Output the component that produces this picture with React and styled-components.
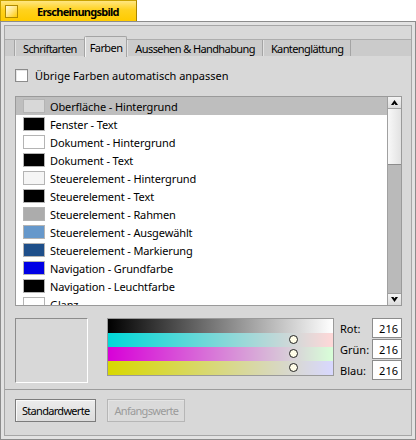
import React from 'react'
import styled, { createGlobalStyle } from 'styled-components'

const Global = createGlobalStyle`
  body {
    margin: 0;
    background: #fff;
    font-family: "Noto Sans", "DejaVu Sans", sans-serif;
    font-size: 11px;
    color: #000;
  }
`

const colors = [
    ['Oberfläche - Hintergrund', '#d8d8d8'],
    ['Fenster - Text', '#000000'],
    ['Dokument - Hintergrund', '#ffffff'],
    ['Dokument - Text', '#000000'],
    ['Steuerelement - Hintergrund', '#f5f5f5'],
    ['Steuerelement - Text', '#000000'],
    ['Steuerelement - Rahmen', '#acacac'],
    ['Steuerelement - Ausgewählt', '#6698cb'],
    ['Steuerelement - Markierung', '#1e4f8a'],
    ['Navigation - Grundfarbe', '#0000e5'],
    ['Navigation - Leuchtfarbe', '#000000'],
    ['Glanz', '#ffffff'],
]

const tabs = ['Schriftarten', 'Farben', 'Aussehen & Handhabung', 'Kantenglättung']

const channels = [
    { label: 'Rot:', from: 'rgb(0,216,216)', to: 'rgb(255,216,216)' },
    { label: 'Grün:', from: 'rgb(216,0,216)', to: 'rgb(216,255,216)' },
    { label: 'Blau:', from: 'rgb(216,216,0)', to: 'rgb(216,216,255)' },
]

const App = () => {
    // knob position for value 216 out of 255
    const thumbLeft = `calc(${216 / 255} * (100% - 9px) - 2px)`
    return (
        <Page>
            <Global />
            <TitleTab>
                <CloseBox />
                <Title>Erscheinungsbild</Title>
            </TitleTab>
            <Frame>
                <Inner>
                    <TabView>
                        <TabStrip>
                            <TabLead />
                            {tabs.map(t => (
                                <Tab key={t} $active={t === 'Farben'}>{t}</Tab>
                            ))}
                        </TabStrip>
                        <Pane>
                            <CheckRow>
                                <Check />
                                <span>Übrige Farben automatisch anpassen</span>
                            </CheckRow>
                            <ListBox>
                                <List>
                                    {colors.map(([name, c], i) => (
                                        <Row key={name} $selected={i === 0}>
                                            <Swatch $color={c} />
                                            <span>{name}</span>
                                        </Row>
                                    ))}
                                </List>
                                <ScrollBar>
                                    <ArrowButton>
                                        <svg width="7" height="5" viewBox="0 0 7 5">
                                            <path d="M3.5 0 L7 5 L4.5 5 L3.5 3.5 L2.5 5 L0 5 Z" fill="#000" />
                                        </svg>
                                    </ArrowButton>
                                    <Thumb />
                                    <Trough />
                                    <ArrowButton>
                                        <svg width="7" height="5" viewBox="0 0 7 5">
                                            <path d="M3.5 5 L7 0 L4.5 0 L3.5 1.5 L2.5 0 L0 0 Z" fill="#000" />
                                        </svg>
                                    </ArrowButton>
                                </ScrollBar>
                            </ListBox>
                            <ColorRow>
                                <Preview />
                                <Sliders>
                                    <Ramp $from="#000" $to="#fff" />
                                    {channels.map(ch => (
                                        <Ramp key={ch.label} $from={ch.from} $to={ch.to}>
                                            <Knob style={{ left: thumbLeft }} />
                                        </Ramp>
                                    ))}
                                </Sliders>
                                <Fields>
                                    {channels.map(ch => (
                                        <FieldRow key={ch.label}>
                                            <FieldLabel>{ch.label}</FieldLabel>
                                            <Input>216</Input>
                                        </FieldRow>
                                    ))}
                                </Fields>
                            </ColorRow>
                        </Pane>
                    </TabView>
                    <ButtonRow>
                        <Button>Standardwerte</Button>
                        <Button $disabled>Anfangswerte</Button>
                    </ButtonRow>
                </Inner>
            </Frame>
        </Page>
    )
}

const Page = styled.div`
    width: 416px;
    height: 440px;
    display: flex;
    flex-direction: column;
`
const TitleTab = styled.div`
    width: 137px;
    height: 21px;
    box-sizing: border-box;
    border: 1px solid #c9a200;
    border-bottom: none;
    border-right-color: #a88400;
    background: linear-gradient(to bottom, #ffe680 0%, #ffd21e 45%, #ffcb00 100%);
    display: flex;
    align-items: center;
    padding-left: 4px;
`
const CloseBox = styled.div`
    width: 13px;
    height: 13px;
    box-sizing: border-box;
    border: 1px solid #b08a00;
    background: linear-gradient(135deg, #fffbe0 0%, #ffe580 50%, #ffcb00 100%);
`
const Title = styled.div`
    margin-left: 19px;
    font-weight: bold;
    font-size: 11px;
    letter-spacing: -0.75px;
`
const Frame = styled.div`
    flex: 1;
    border: 1px solid #8c8c8c;
    background: #e2e2e2;
    padding: 3px;
    display: flex;
`
const Inner = styled.div`
    flex: 1;
    border: 1px solid #a6a6a6;
    background: #d8d8d8;
    display: flex;
    flex-direction: column;
`
const TabView = styled.div`
    display: flex;
    flex-direction: column;
    border-bottom: 1px solid #9c9c9c;
`
const TabStrip = styled.div`
    margin-top: 13px;
    height: 16px;
    display: flex;
    align-items: flex-end;
    background: #cbcbcb;
    border-top: 1px solid #adadad;
`
const TabLead = styled.div`
    width: 9px;
    height: 16px;
    border-right: 1px solid #a4a4a4;
`
const Tab = styled.div`
    box-sizing: border-box;
    height: ${p => (p.$active ? '21px' : '16px')};
    padding: ${p => (p.$active ? '1px 4px 0' : '0 7px')};
    display: flex;
    align-items: center;
    letter-spacing: -0.6px;
    background: ${p => (p.$active ? '#d8d8d8' : '#cbcbcb')};
    border-left: 1px solid ${p => (p.$active ? '#f4f4f4' : '#e2e2e2')};
    border-right: 1px solid #a4a4a4;
    border-top: ${p => (p.$active ? '1px solid #a4a4a4' : 'none')};
    border-radius: ${p => (p.$active ? '2px 2px 0 0' : '0')};
    box-shadow: ${p => (p.$active ? '-1px 0 0 #a4a4a4' : 'none')};
    margin-bottom: ${p => (p.$active ? '-1px' : '0')};
    color: #000;
    white-space: nowrap;
`
const Pane = styled.div`
    height: 333px;
    padding: 0 9px 0 10px;
    display: flex;
    flex-direction: column;
`
const CheckRow = styled.label`
    margin-top: 13px;
    height: 13px;
    display: flex;
    align-items: center;
    gap: 7px;
`
const Check = styled.span`
    width: 13px;
    height: 13px;
    box-sizing: border-box;
    border: 1px solid #8c8c8c;
    background: #fff;
    box-shadow: inset 1px 1px 0 #e6e6e6;
`
const ListBox = styled.div`
    margin-top: 14px;
    height: 210px;
    box-sizing: border-box;
    border: 1px solid #9a9a9a;
    display: flex;
    background: #fff;
`
const List = styled.div`
    flex: 1;
    overflow: hidden;
    display: flex;
    flex-direction: column;
`
const Row = styled.div`
    flex: none;
    height: 18px;
    display: flex;
    align-items: center;
    padding-left: 7px;
    gap: 5px;
    letter-spacing: -0.12px;
    background: ${p => (p.$selected ? '#bebebe' : '#fff')};
`
const Swatch = styled.span`
    width: 22px;
    height: 14px;
    box-sizing: border-box;
    border: 1px solid #b4b4b4;
    background: ${p => p.$color};
`
const ScrollBar = styled.div`
    width: 13px;
    border-left: 1px solid #a0a0a0;
    display: flex;
    flex-direction: column;
    background: #bcbcbc;
`
const ArrowButton = styled.div`
    height: 12px;
    box-sizing: border-box;
    border: 1px solid #a0a0a0;
    border-left: none;
    border-right: none;
    background: linear-gradient(to bottom, #f4f4f4, #dcdcdc);
    display: flex;
    align-items: center;
    justify-content: center;
    &:first-child { border-top: none; }
    &:last-child { border-bottom: none; }
`
const Thumb = styled.div`
    height: 56px;
    box-sizing: border-box;
    border-bottom: 1px solid #8c8c8c;
    background: linear-gradient(to right, #f8f8f8, #e2e2e2);
`
const Trough = styled.div`
    flex: 1;
    background: #bababa;
`
const ColorRow = styled.div`
    margin-top: 12px;
    display: flex;
    align-items: flex-start;
`
const Preview = styled.div`
    width: 73px;
    height: 65px;
    box-sizing: border-box;
    border: 1px solid;
    border-color: #8c8c8c #fff #fff #8c8c8c;
    background: #d8d8d8;
`
const Sliders = styled.div`
    margin-left: 19px;
    width: 227px;
    box-sizing: border-box;
    border: 1px solid #9a9a9a;
    display: flex;
    flex-direction: column;
`
const Ramp = styled.div`
    position: relative;
    height: 14px;
    background: linear-gradient(to right, ${p => p.$from}, ${p => p.$to});
`
const Knob = styled.span`
    position: absolute;
    top: 2px;
    width: 9px;
    height: 9px;
    box-sizing: border-box;
    border-radius: 50%;
    border: 1px solid #202020;
    background: #fffde8;
`
const Fields = styled.div`
    margin-left: 6px;
    flex: 1;
    display: flex;
    flex-direction: column;
    gap: 1px;
`
const FieldRow = styled.div`
    height: 20px;
    display: flex;
    align-items: center;
`
const FieldLabel = styled.span`
    flex: 1;
`
const Input = styled.div`
    width: 30px;
    height: 20px;
    box-sizing: border-box;
    border: 1px solid #8c8c8c;
    background: #fff;
    text-align: right;
    padding: 2px 3px 0 0;
`
const ButtonRow = styled.div`
    padding: 9px 10px;
    display: flex;
    gap: 11px;
`
const Button = styled.div`
    height: 23px;
    box-sizing: border-box;
    padding: 0 6px;
    display: flex;
    align-items: center;
    letter-spacing: -0.7px;
    border: 1px solid ${p => (p.$disabled ? '#b6b6b6' : '#7c7c7c')};
    box-shadow: inset 1px 1px 0 ${p => (p.$disabled ? '#e4e4e4' : '#fafafa')};
    background: ${p => (p.$disabled ? '#dadada' : 'linear-gradient(to bottom, #ececec, #dcdcdc)')};
    color: ${p => (p.$disabled ? '#9a9a9a' : '#000')};
`

export default App
